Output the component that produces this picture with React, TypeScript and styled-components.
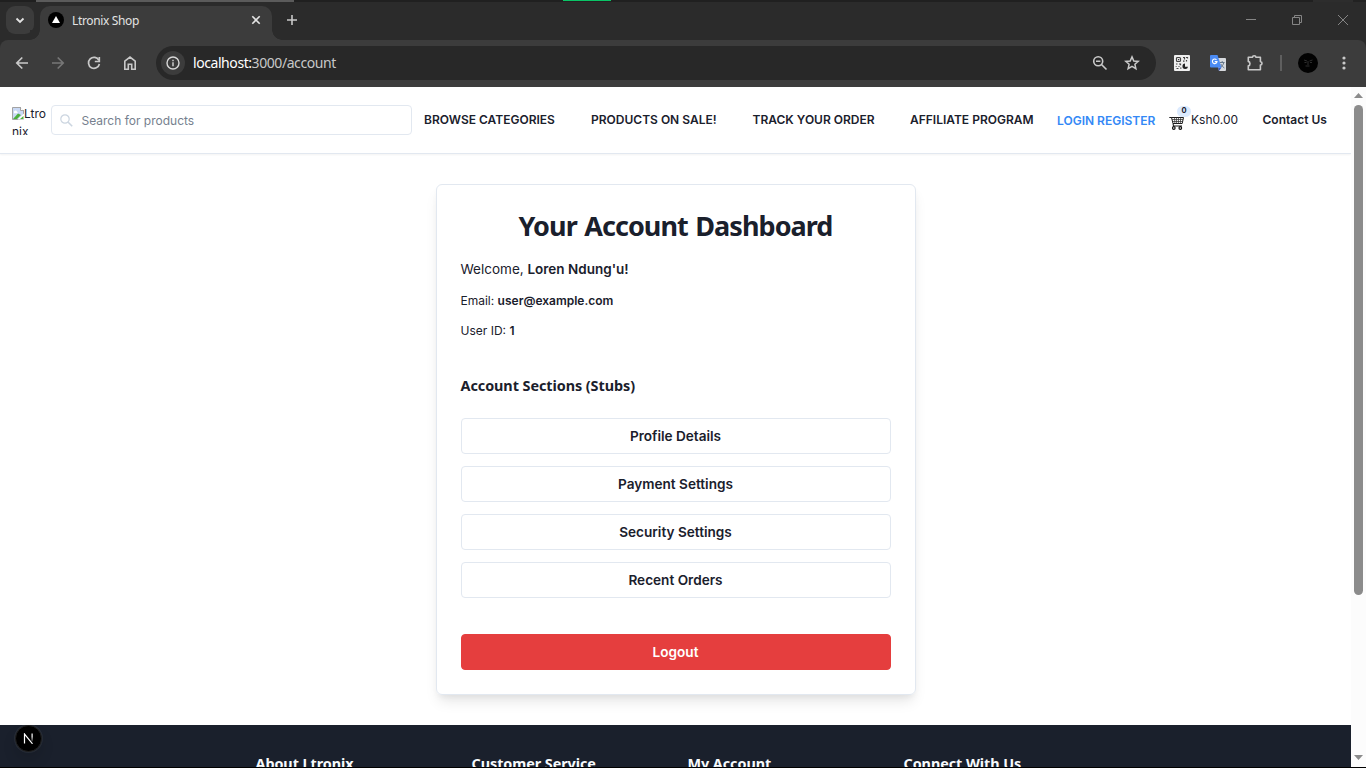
import React from "react";
import styled, { createGlobalStyle } from "styled-components";

const GlobalStyle = createGlobalStyle`
  * { box-sizing: border-box; }
  body { margin: 0; overflow: hidden; background: #000; }
`;

const ui = `"Noto Sans", "Open Sans", sans-serif`;
const inter = `Inter, "Liberation Sans", sans-serif`;

const Window = styled.div`
  width: 1366px;
  height: 768px;
  display: flex;
  flex-direction: column;
  overflow: hidden;
  background: #000;
`;

/* ---------- browser chrome ---------- */

const Backdrop = styled.div`
  height: 2px;
  flex: none;
  display: flex;
  background: #222;
`;
const BackdropPart = styled.div<{ $w: number; $c: string; $h?: number }>`
  width: ${(p) => p.$w}px;
  height: ${(p) => p.$h ?? 2}px;
  background: ${(p) => p.$c};
`;

const TabStrip = styled.div`
  height: 38px;
  flex: none;
  display: flex;
  background: #2b2b2b;
  padding-left: 6px;
`;
const TabSearch = styled.div`
  width: 28px;
  height: 28px;
  margin-top: 4px;
  border-radius: 9px;
  background: #3c3c3c;
  display: flex;
  align-items: center;
  justify-content: center;
`;
const Tab = styled.div`
  position: relative;
  width: 232px;
  height: 34px;
  margin: 4px 0 0 6px;
  padding: 0 10px 6px 8px;
  border-radius: 10px 10px 0 0;
  background: #3c3c3c;
  display: flex;
  align-items: center;
  &::before,
  &::after {
    content: "";
    position: absolute;
    bottom: 0;
    width: 10px;
    height: 10px;
  }
  &::before {
    left: -10px;
    background: radial-gradient(circle at 0 0, #2b2b2b 9.5px, #3c3c3c 10px);
  }
  &::after {
    right: -10px;
    background: radial-gradient(circle at 100% 0, #2b2b2b 9.5px, #3c3c3c 10px);
  }
`;
const TabTitle = styled.span`
  flex: 1;
  margin-left: 8px;
  padding-top: 2px;
  font: 12px/16px ${ui};
  letter-spacing: -0.36px;
  color: #e3e3e3;
`;
const NewTab = styled.div`
  width: 28px;
  height: 28px;
  margin: 4px auto 0 6px;
  display: flex;
  align-items: center;
  justify-content: center;
`;
const WindowControls = styled.div`
  display: flex;
  height: 36px;
  align-items: center;
  div {
    width: 46px;
    display: flex;
    justify-content: center;
  }
`;

const ToolbarShell = styled.div`
  flex: none;
  background: #2b2b2b;
`;
const Toolbar = styled.div`
  height: 47px;
  display: flex;
  align-items: center;
  padding-bottom: 1px;
  background: #3c3c3c;
  border-radius: 8px 8px 0 0;
`;
const ToolSlot = styled.div<{ $w?: number }>`
  width: ${(p) => p.$w ?? 36}px;
  height: 34px;
  flex: none;
  display: flex;
  align-items: center;
  justify-content: center;
`;
const Omnibox = styled.div`
  width: 1000px;
  height: 34px;
  flex: none;
  border-radius: 17px;
  background: #282828;
  display: flex;
  align-items: center;
  padding-left: 5px;
  padding-right: 8px;
  margin-right: 8px;
`;
const SiteInfo = styled.div`
  width: 24px;
  height: 24px;
  border-radius: 12px;
  background: #3c3c3c;
  display: flex;
  align-items: center;
  justify-content: center;
`;
const Url = styled.div`
  flex: 1;
  margin-left: 8px;
  font: 14px/20px ${ui};
  letter-spacing: -0.43px;
  color: #c7c7c7;
  b {
    font-weight: 400;
    color: #fff;
  }
`;
const OmniSlot = styled.div`
  width: 32px;
  display: flex;
  justify-content: center;
`;
const Separator = styled.div`
  width: 2px;
  height: 16px;
  margin: 0 8px 0 7px;
  background: #5f5f5f;
`;

/* ---------- page ---------- */

const Viewport = styled.div`
  height: 680px;
  flex: none;
  display: flex;
  overflow: hidden;
`;
const Page = styled.div`
  position: relative;
  width: 1351px;
  height: 680px;
  overflow: hidden;
  background: #fff;
  display: flex;
  flex-direction: column;
  align-items: center;
  font-family: ${inter};
  color: #1a202c;
`;
const Header = styled.header`
  width: 100%;
  height: 67px;
  flex: none;
  display: flex;
  align-items: center;
  padding-left: 12px;
  border-bottom: 1px solid #e2e8f0;
  box-shadow: 0 1px 2px rgba(0, 0, 0, 0.05);
`;
const Logo = styled.div`
  width: 36px;
  height: 30px;
  overflow: hidden;
  font-size: 12px;
  line-height: 18px;
  word-break: break-all;
  svg {
    vertical-align: -2px;
  }
`;
const SearchBox = styled.div`
  width: 361px;
  height: 30px;
  margin-left: 3px;
  border: 1px solid #e2e8f0;
  border-radius: 4px;
  display: flex;
  align-items: center;
  padding-left: 8px;
  gap: 8.5px;
  font-size: 12px;
  color: #767f8e;
`;
const NavLink = styled.a<{ $ml: number; $w: number }>`
  width: ${(p) => p.$w}px;
  margin-left: ${(p) => p.$ml}px;
  flex: none;
  white-space: nowrap;
  font-size: 12px;
  line-height: 18px;
  font-weight: 600;
  color: #1a202c;
`;
const AuthLink = styled(NavLink)`
  color: #3388f6;
  margin-top: 2px;
`;
const Cart = styled.div`
  position: relative;
  width: 16px;
  height: 16px;
  margin: 3px 0 0 13px;
`;
const CartCount = styled.span`
  position: absolute;
  left: 8px;
  top: -8px;
  width: 14px;
  height: 11px;
  border-radius: 6px;
  background: #dbeafe;
  font-size: 7.5px;
  line-height: 10px;
  font-weight: 700;
  text-align: center;
`;
const CartTotal = styled.span`
  width: 48px;
  margin-left: 6px;
  font-size: 12px;
  line-height: 18px;
`;

const Card = styled.main`
  width: 480px;
  height: 511px;
  flex: none;
  margin-top: 30px;
  border: 1px solid #e2e8f0;
  border-radius: 6px;
  padding: 23px 24px 0;
  display: flex;
  flex-direction: column;
  box-shadow: 0 9px 13.5px -3px rgba(0, 0, 0, 0.1), 0 4px 6px -2px rgba(0, 0, 0, 0.05);
`;
const Title = styled.h1`
  margin: 0 0 15px;
  font: 700 27px/36px ${ui};
  letter-spacing: -0.95px;
  word-spacing: 1.4px;
  text-align: center;
  white-space: nowrap;
`;
const Welcome = styled.p`
  margin: 0 0 13px;
  font-size: 13.5px;
  line-height: 20px;
  b {
    font-weight: 600;
  }
`;
const Detail = styled.p`
  margin: 0 0 12px;
  font-size: 12px;
  line-height: 18px;
  b {
    font-weight: 600;
  }
`;
const SectionTitle = styled.h2`
  margin: 23px 0 21px;
  font: 700 14.4px/22px ${ui};
  letter-spacing: -0.06px;
`;
const Sections = styled.div`
  display: flex;
  flex-direction: column;
  gap: 12px;
`;
const Button = styled.button<{ $danger?: boolean }>`
  width: 430px;
  height: 36px;
  padding: 0;
  border: 1px solid ${(p) => (p.$danger ? "#e53e3e" : "#e2e8f0")};
  border-radius: 4px;
  background: ${(p) => (p.$danger ? "#e53e3e" : "#fff")};
  color: ${(p) => (p.$danger ? "#fff" : "#1a202c")};
  margin-top: ${(p) => (p.$danger ? 36 : 0)}px;
  font: 600 13.6px/20px ${inter};
`;

const Footer = styled.footer`
  width: 100%;
  height: 200px;
  flex: none;
  margin-top: 30px;
  padding: 28px 0 0 255.5px;
  background: #1a202c;
  display: flex;
`;
const FooterHeading = styled.h3`
  width: 216px;
  margin: 0;
  color: #f7fafc;
  font: 700 14.4px/22px ${ui};
  letter-spacing: -0.06px;
`;
const DevBadge = styled.div`
  position: absolute;
  left: 15px;
  top: 638px;
  width: 27px;
  height: 27px;
  border-radius: 14px;
  background: #000;
  border: 1px solid #1f1f1f;
  display: flex;
  align-items: center;
  justify-content: center;
  box-shadow: 0 0 0 1px rgba(255, 255, 255, 0.06), 0 8px 14px rgba(0, 0, 0, 0.12);
`;

const Scrollbar = styled.div`
  width: 15px;
  height: 680px;
  background: #fcfcfc;
  display: flex;
  flex-direction: column;
  align-items: center;
  padding: 6px 0 7px;
`;
const Thumb = styled.div`
  width: 9px;
  height: 490px;
  margin: 7px 0 auto;
  border-radius: 5px;
  background: #8b8b8b;
`;

const stroke = (c: string, w = 1.7) => ({ fill: "none", stroke: c, strokeWidth: w });

const ScrollArrow = ({ down }: { down?: boolean }) => (
  <svg width="9" height="5" viewBox="0 0 9 5">
    <path d={down ? "M0 0h9L4.5 5z" : "M0 5h9L4.5 0z"} fill="#8b8b8b" />
  </svg>
);

const navItems = [
  { label: "BROWSE CATEGORIES", ml: 12, w: 131 },
  { label: "PRODUCTS ON SALE!", ml: 36, w: 126 },
  { label: "TRACK YOUR ORDER", ml: 35.5, w: 121.5 },
  { label: "AFFILIATE PROGRAM", ml: 36, w: 123 },
];
const sections = ["Profile Details", "Payment Settings", "Security Settings", "Recent Orders"];
const footerColumns = ["About Ltronix", "Customer Service", "My Account", "Connect With Us"];

function BrowserChrome() {
  const g = "#c9c9c9";
  return (
    <>
      <Backdrop>
        <BackdropPart $w={36} $c="#1f1f1f" />
        <BackdropPart $w={258} $c="#5b5b5b" />
        <BackdropPart $w={269} $c="#202020" />
        <BackdropPart $w={48} $c="#0ac466" $h={1} />
        <BackdropPart $w={702} $c="#202020" />
        <BackdropPart $w={40} $c="#2d2d2d" />
      </Backdrop>
      <TabStrip>
        <TabSearch>
          <svg width="10" height="7" viewBox="0 0 10 7"><path d="M1.5 1.5L5 5l3.5-3.5" {...stroke("#e3e3e3", 1.8)} /></svg>
        </TabSearch>
        <Tab>
          <svg width="16" height="16" viewBox="0 0 16 16">
            <circle cx="8" cy="8" r="8" fill="#000" />
            <path d="M8 4l4 7H4z" fill="#fff" />
          </svg>
          <TabTitle>Ltronix Shop</TabTitle>
          <svg width="12" height="12" viewBox="0 0 12 12"><path d="M2.3 2.3l7.4 7.4M9.7 2.3L2.3 9.7" {...stroke("#e3e3e3", 1.6)} /></svg>
        </Tab>
        <NewTab>
          <svg width="12" height="12" viewBox="0 0 12 12"><path d="M6 1v10M1 6h10" {...stroke(g, 1.6)} /></svg>
        </NewTab>
        <WindowControls>
          <div><svg width="10" height="10" viewBox="0 0 10 10"><path d="M0 4.5h10" {...stroke("#858585", 1)} /></svg></div>
          <div><svg width="10" height="10" viewBox="0 0 10 10"><path d="M.5 2.5h7v7h-7zM2.5 2.5v-2h7v7h-2" {...stroke("#858585", 1)} /></svg></div>
          <div><svg width="10" height="10" viewBox="0 0 10 10"><path d="M0 0l10 10M10 0L0 10" {...stroke("#858585", 1)} /></svg></div>
        </WindowControls>
      </TabStrip>
      <ToolbarShell>
        <Toolbar>
          <ToolSlot $w={44}>
            <svg width="14" height="14" viewBox="0 0 14 14"><path d="M13 7H2M7.3 1.5L1.800 7l5.5 5.5" {...stroke(g)} /></svg>
          </ToolSlot>
          <ToolSlot $w={28}>
            <svg width="14" height="14" viewBox="0 0 14 14"><path d="M1 7h11M6.7 1.5L12.2 7l-5.5 5.5" {...stroke("#777")} /></svg>
          </ToolSlot>
          <ToolSlot $w={44}>
            <svg width="14" height="14" viewBox="0 0 14 14">
              <path d="M11.900 4.300A5.5 5.5 0 1 0 12.4 8" {...stroke(g)} />
              <path d="M12.3 1v4.5H7.800" {...stroke(g)} />
            </svg>
          </ToolSlot>
          <ToolSlot $w={28}>
            <svg width="14" height="16" viewBox="0 0 14 16"><path d="M1.800 6.200L7 2.100l5.200 4.100v8H8.700V9.300H5.300v4.900H1.800z" {...stroke(g, 1.6)} /></svg>
          </ToolSlot>
          <ToolSlot $w={12} />
          <Omnibox>
            <SiteInfo>
              <svg width="14" height="14" viewBox="0 0 14 14">
                <circle cx="7" cy="7" r="6" {...stroke("#d8d8d8", 1.4)} />
                <path d="M7 6.200v4M7 3.700v1.5" {...stroke("#d8d8d8", 1.4)} />
              </svg>
            </SiteInfo>
            <Url><b>localhost:</b>3000/account</Url>
            <OmniSlot>
              <svg width="16" height="16" viewBox="0 0 16 16">
                <circle cx="6.2" cy="6.2" r="4.5" {...stroke(g, 1.6)} />
                <path d="M9.5 9.5l5 5M4 6.200h4.400" {...stroke(g, 1.6)} />
              </svg>
            </OmniSlot>
            <OmniSlot>
              <svg width="16" height="16" viewBox="0 0 16 16">
                <path d="M8 1.900l1.800 4.100 4.400.4-3.300 2.900 1 4.400L8 11.400l-3.900 2.300 1-4.400-3.300-2.900 4.400-.4z" {...stroke(g, 1.5)} />
              </svg>
            </OmniSlot>
          </Omnibox>
          <ToolSlot>
            <svg width="16" height="16" viewBox="0 0 16 16">
              <rect width="16" height="16" rx="1" fill="#efefef" />
              <rect x="2.5" y="2.5" width="4" height="4" rx="1" {...stroke("#444", 1.2)} />
              <path d="M4 4h1.200v1.200H4z" fill="#333" />
              <path d="M9 2.5h1.5v2M9 6.200h1.5M12 2.5h1.5v1M12.5 5v1.5M2 9h1.5M5 9h1.5v1.200M2.200 11v.8M4.5 11.5h1M2.5 13.5h2M6.800 12.5v1.200" {...stroke("#444", 1.2)} />
              <path d="M11 8.5a2.800 2.800 0 1 0 3 3.200h-3z" fill="#222" />
            </svg>
          </ToolSlot>
          <ToolSlot>
            <svg width="16" height="16" viewBox="0 0 16 16">
              <path d="M6 3h9a1 1 0 0 1 1 1v11a1 1 0 0 1-1 1H9z" fill="#d6d9dd" />
              <path d="M10 7.5h4.5M12.2 6v1.5M13.800 7.5c-.5 2.5-2 4-3.300 5M10.800 9c.8 1.700 2 3 3.600 4" {...stroke("#66788a", 1)} />
              <path d="M8 12.5h3.5L9 16z" fill="#3457c4" />
              <path d="M1 0h6.5l4 12.5H1a1 1 0 0 1-1-1V1a1 1 0 0 1 1-1z" fill="#4b8bf4" />
              <path d="M6.5 4.800A2.300 2.300 0 1 0 7 6.600H4.700" {...stroke("#fff", 1.1)} />
            </svg>
          </ToolSlot>
          <ToolSlot $w={37}>
            <svg width="18" height="18" viewBox="0 0 18 18">
              <path d="M2.300 3.300h4.200a1.700 1.5 0 0 1 3.400 0h4.5v4.300a1.600 1.700 0 0 1 0 3.400v4.700H2.300v-3.800a2.100 2.300 0 0 0 0-4.5z" {...stroke(g, 1.6)} strokeLinejoin="round" />
            </svg>
          </ToolSlot>
          <Separator />
          <ToolSlot>
            <svg width="20" height="20" viewBox="0 0 20 20">
              <circle cx="10" cy="10" r="10" fill="#020202" />
              <path d="M6 7l3 1M11.5 8l3-1M10 8v4M7.5 13h4M6.5 9.5h2M12 9.5h2" {...stroke("#333", 0.9)} />
            </svg>
          </ToolSlot>
          <ToolSlot>
            <svg width="4" height="16" viewBox="0 0 4 16" fill={g}>
              <circle cx="2" cy="3" r="1.6" /><circle cx="2" cy="8" r="1.6" /><circle cx="2" cy="13" r="1.6" />
            </svg>
          </ToolSlot>
        </Toolbar>
      </ToolbarShell>
    </>
  );
}

function ShopHeader() {
  return (
    <Header>
      <Logo>
        <svg width="12" height="13" viewBox="0 0 12 13">
          <path d="M.5.5h8l3 3v9H.5z" fill="#c9d9f5" stroke="#a3a3a3" />
          <path d="M8.5 0v3.5H12" fill="#fff" stroke="#a3a3a3" />
          <path d="M2 5.200a1.5 1.5 0 0 1 3-.5 1 1 0 0 1 .5 1.5H2z" fill="#fff" />
          <path d="M1 12l5-5.5 3 1.5L5 12z" fill="#4caf3c" />
          <path d="M5.5 12.5L12 6.5v6z" fill="#fff" />
          <path d="M8 12h3.5V9z" fill="#4caf3c" />
        </svg>
        Ltronix
      </Logo>
      <SearchBox>
        <svg width="13" height="13" viewBox="0 0 13 13">
          <circle cx="5" cy="5" r="4.2" {...stroke("#cbd5e0", 1.2)} />
          <path d="M8.200 8.200l4 4" {...stroke("#cbd5e0", 1.6)} />
        </svg>
        Search for products
      </SearchBox>
      {navItems.map((n) => (
        <NavLink key={n.label} $ml={n.ml} $w={n.w}>{n.label}</NavLink>
      ))}
      <AuthLink $ml={24} $w={99}>LOGIN REGISTER</AuthLink>
      <Cart>
        <svg width="15" height="14" viewBox="0 0 15 14">
          <path d="M.3 1.500h2.400M2.500 1.500h12l-1.300 6H4z" {...stroke("#1a1a1a", 1)} />
          <path d="M3 3.500h11M3.500 5.500h10M5.500 1.500l.4 6M7.500 1.500l.1 6M9.500 1.500l-.1 6M11.700 1.500l-.4 6" {...stroke("#333", 0.75)} />
          <path d="M4 7.500l.5 2.500h8.500" {...stroke("#1a1a1a", 1.1)} />
          <circle cx="4.800" cy="12" r="1.300" {...stroke("#111", 1.2)} />
          <circle cx="11.300" cy="12" r="1.300" {...stroke("#111", 1.2)} />
        </svg>
        <CartCount>0</CartCount>
      </Cart>
      <CartTotal>Ksh0.00</CartTotal>
      <NavLink $ml={23.5} $w={66}>Contact Us</NavLink>
    </Header>
  );
}

export default function App() {
  return (
    <Window>
      <GlobalStyle />
      <BrowserChrome />
      <Viewport>
        <Page>
          <ShopHeader />
          <Card>
            <Title>Your Account Dashboard</Title>
            <Welcome>Welcome, <b>Loren Ndung'u!</b></Welcome>
            <Detail>Email: <b>user@example.com</b></Detail>
            <Detail>User ID: <b>1</b></Detail>
            <SectionTitle>Account Sections (Stubs)</SectionTitle>
            <Sections>
              {sections.map((s) => <Button key={s}>{s}</Button>)}
            </Sections>
            <Button $danger>Logout</Button>
          </Card>
          <Footer>
            {footerColumns.map((f) => <FooterHeading key={f}>{f}</FooterHeading>)}
          </Footer>
          <DevBadge>
            <svg width="11" height="11" viewBox="0 0 11 11">
              <defs>
                <linearGradient id="stem" x1="0" y1="0" x2="0" y2="1">
                  <stop offset="0.4" stopColor="#fff" /><stop offset="1" stopColor="#fff" stopOpacity="0.2" />
                </linearGradient>
              </defs>
              <path d="M1.5 10.5V1l8 9.800" {...stroke("#fff", 1.2)} />
              <rect x="8.5" y="0.5" width="1.2" height="8" fill="url(#stem)" />
            </svg>
          </DevBadge>
        </Page>
        <Scrollbar>
          <ScrollArrow />
          <Thumb />
          <ScrollArrow down />
        </Scrollbar>
      </Viewport>
    </Window>
  );
}
